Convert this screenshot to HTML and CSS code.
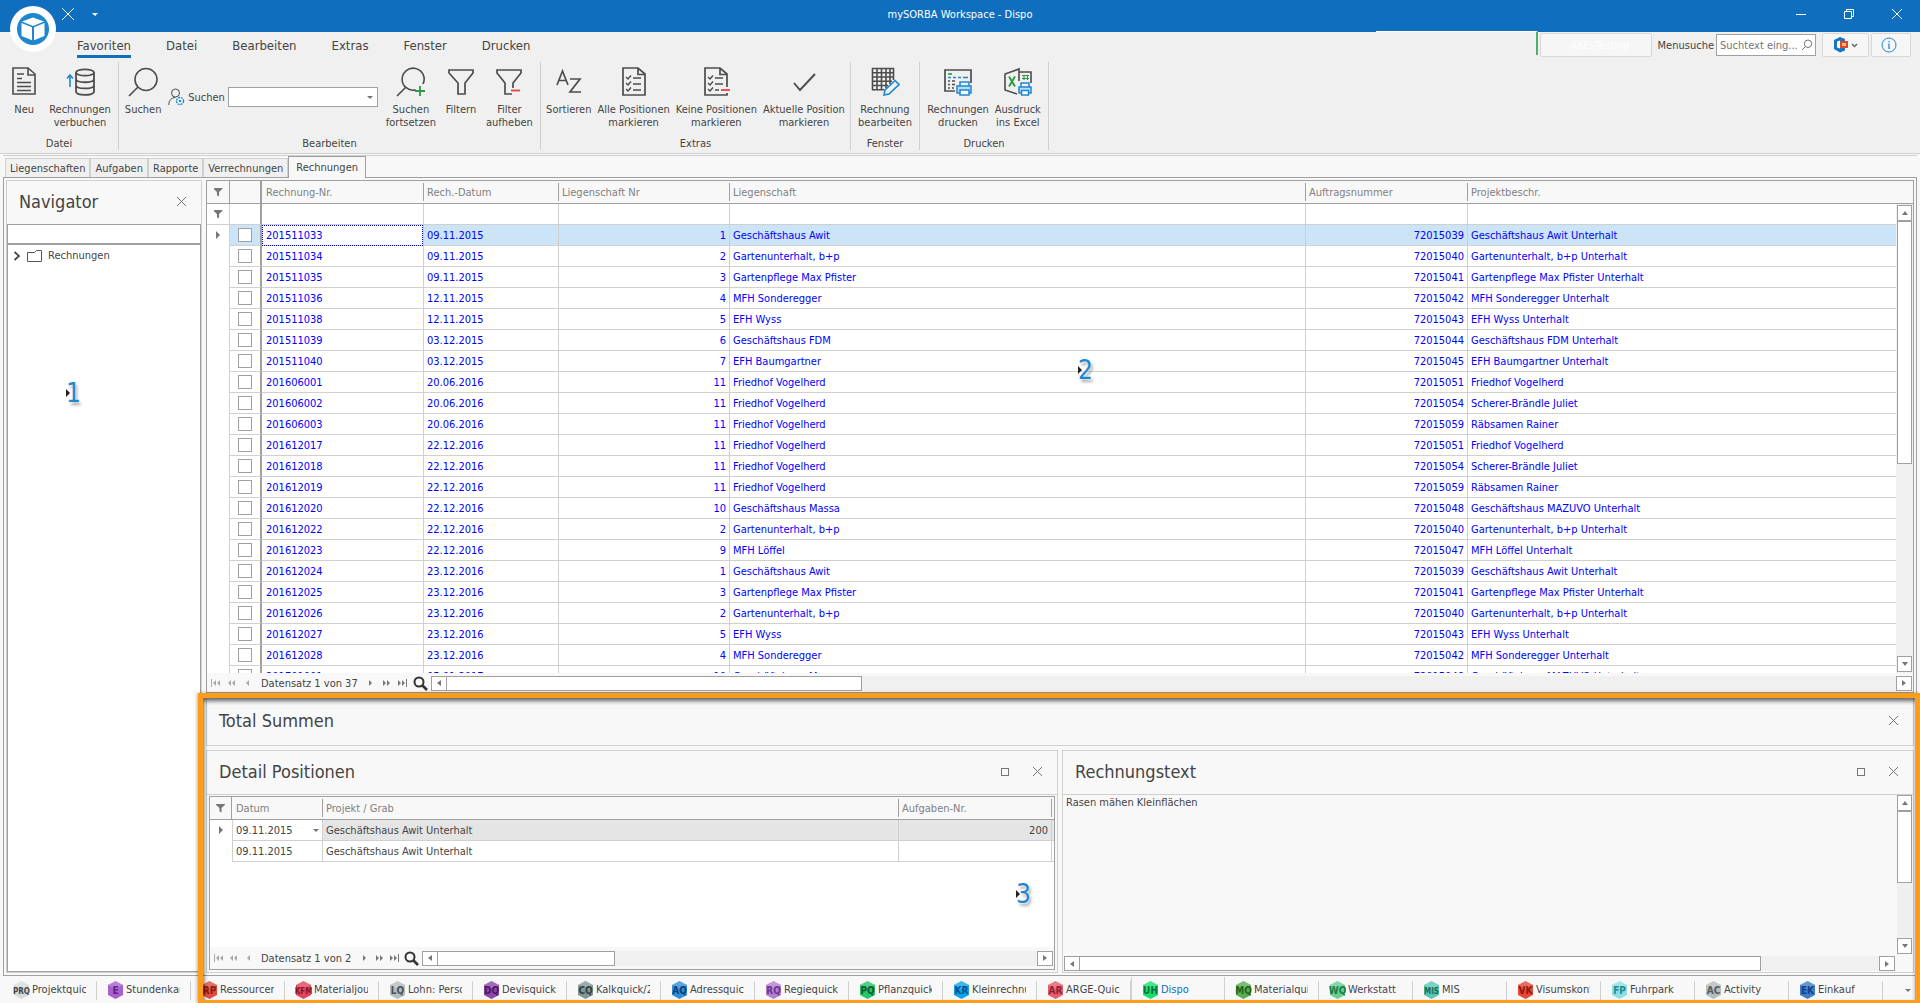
FILE: index.html
```
<!DOCTYPE html>
<html lang="de">
<head>
  <meta charset="UTF-8">
  <meta name="viewport" content="width=device-width, initial-scale=1.0">
  <title>mySORBA Workspace - Dispo</title>
  <link rel="stylesheet" href="styles.css">
</head>
<body>

<header class="titlebar">
  <div class="quick">
    <button aria-label="Schliessen"><svg width="14" height="14" viewBox="0 0 14 14"><path d="M1 1l12 12M13 1L1 13" stroke="#fff" fill="none"/></svg></button>
    <button aria-label="Anpassen"><span class="caret white"></span></button>
  </div>
  <div class="title">mySORBA Workspace - Dispo</div>
  <div class="window-buttons">
    <button aria-label="Minimieren"><svg width="12" height="12" viewBox="0 0 12 12"><path d="M1 6.500h10" stroke="#fff"/></svg></button>
    <button aria-label="Verkleinern"><svg width="12" height="12" viewBox="0 0 12 12"><path d="M1.500 3.500h7v7h-7zM3.500 3.500v-2h7v7h-2" stroke="#fff" fill="none"/></svg></button>
    <button aria-label="Beenden"><svg width="12" height="12" viewBox="0 0 12 12"><path d="M1 1l10 10M11 1L1 11" stroke="#fff" fill="none"/></svg></button>
  </div>
</header>

<svg class="logo" width="46" height="46" viewBox="0 0 46 46">
  <circle cx="23" cy="23" r="23" fill="#fff"/>
  <circle cx="23" cy="23" r="16" fill="#1e87d2"/>
  <path d="M23 11.500l11 4-11 4.500-11-4.500zM11.500 17l10.500 4.300v13L11.500 30zM34.500 17L24 21.300v13L34.500 30z" fill="#fff"/>
</svg>

<section class="ribbon">
  <div class="menu-row">
    <nav class="menu">
      <a href="#" class="active">Favoriten</a>
      <a href="#">Datei</a>
      <a href="#">Bearbeiten</a>
      <a href="#">Extras</a>
      <a href="#">Fenster</a>
      <a href="#">Drucken</a>
    </nav>
    <div class="menu-tools">
      <div class="progress"></div>
      <select class="user-select" aria-label="Benutzer"><option>AaEsTesting</option></select>
      <label for="menuSearch">Menusuche</label>
      <div class="search-box">
        <input type="text" id="menuSearch" placeholder="Suchtext eing...">
        <svg width="12" height="12" viewBox="0 0 12 12"><path d="M7 1a3.500 3.500 0 1 1 0 7.500A3.700 3.700 0 0 1 7 1zM4.500 7.500L1 11" stroke="#777" fill="none"/></svg>
      </div>
      <button class="tool office" aria-label="Office">
        <svg width="15" height="16" viewBox="0 0 15 16"><path d="M7 0L1 3v9l6 3.500 5-2V11H6V4h6V2z" fill="#1576c4"/><path d="M7 4h8v7H7z" fill="#e04a17"/><path d="M9 6h4v3H9z" fill="#fff" opacity=".6"/><path d="M4 4.500l3-1v8l-3-1z" fill="#fff"/></svg>
        <svg width="7" height="5" viewBox="0 0 7 5"><path d="M1 1l2.500 2.500L6 1" stroke="#666" stroke-width="1.500" fill="none"/></svg>
      </button>
      <button class="tool info" aria-label="Info">
        <svg width="16" height="16" viewBox="0 0 16 16"><circle cx="8" cy="8" r="7" stroke="#1e87d2" fill="none"/><path d="M8 6.500V12M8 4v1.200" stroke="#1e87d2" stroke-width="1.300"/></svg>
      </button>
    </div>
  </div>

  <div class="groups">
    <div class="group datei">
      <div class="group-items">
        <button class="big"><svg width="28" height="30" viewBox="0 0 28 30"><g stroke="#4d4d4d" stroke-width="1.600" fill="none"><path d="M3 2h15l7 6v20H3z" transform="translate(0 -1)"/><path d="M18 1v7h7"/><path d="M7 7h7M7 11.500h5M7 15.500h14M7 19.500h14M7 23.500h14" stroke-width="1.300"/></g></svg><span>Neu</span></button>
        <button class="big"><svg width="30" height="30" viewBox="0 0 30 30"><g stroke="#4d4d4d" stroke-width="1.800" fill="none"><ellipse cx="20" cy="5.500" rx="9" ry="3.200"/><path d="M11 5.500v19c0 4.500 18 4.500 18 0v-19M11 12c0 4.300 18 4.300 18 0M11 18.200c0 4.300 18 4.300 18 0"/></g><path d="M5 20V8M2 11.500L5 8l3 3.500" stroke="#1e87d2" stroke-width="1.600" fill="none"/></svg><span>Rechnungen<br>verbuchen</span></button>
      </div>
      <div class="caption">Datei</div>
    </div>

    <div class="group bearbeiten">
      <div class="group-items">
        <button class="big"><svg width="30" height="30" viewBox="0 0 30 30"><path d="M18 1.500a11 11 0 1 1 0 22 11 11 0 0 1 0-22zM10 20l-9 9" stroke="#4d4d4d" stroke-width="1.600" fill="none"/></svg><span>Suchen</span></button>
        <div class="person-search">
          <svg width="17" height="18" viewBox="0 0 17 18"><g stroke="#4d4d4d" fill="none"><circle cx="7.500" cy="5" r="4"/><path d="M.8 17c0-5 3-7.500 6.700-7.500"/></g><circle cx="12" cy="13" r="3.500" fill="#fff" stroke="#1e87d2" stroke-width="1.400" stroke-dasharray="2 .8"/><circle cx="12" cy="13" r="1.300" fill="#1e87d2"/></svg>
          <label for="personSelect">Suchen</label>
          <div class="combo"><select id="personSelect"><option></option></select><span class="caret"></span></div>
        </div>
        <button class="big"><svg width="30" height="30" viewBox="0 0 30 30"><path d="M19.500 22.900A11 11 0 1 1 27 17M10 20l-9 9" stroke="#4d4d4d" stroke-width="1.600" fill="none"/><path d="M24 19v10M19 24h10" stroke="#2a9a47" stroke-width="1.800"/></svg><span>Suchen<br>fortsetzen</span></button>
        <button class="big"><svg width="28" height="30" viewBox="0 0 28 30"><path d="M2 3h24v3l-8 10v11h-7V16L2 6z" stroke="#4d4d4d" stroke-width="1.700" fill="none"/></svg><span>Filtern</span></button>
        <button class="big"><svg width="28" height="30" viewBox="0 0 28 30"><path d="M18 21v-5l8-10V3H2v3l8 10v11h7" stroke="#4d4d4d" stroke-width="1.700" fill="none"/><path d="M16 23.500h9" stroke="#f04040" stroke-width="1.800"/></svg><span>Filter<br>aufheben</span></button>
      </div>
      <div class="caption">Bearbeiten</div>
    </div>

    <div class="group extras">
      <div class="group-items">
        <button class="big"><svg width="28" height="30" viewBox="0 0 28 30"><path d="M2 18L7.500 4 13 18M4 13.500h7M15 12h10L15 25h11" stroke="#4d4d4d" stroke-width="1.700" fill="none"/></svg><span>Sortieren</span></button>
        <button class="big"><svg width="28" height="30" viewBox="0 0 28 30"><g stroke="#4d4d4d" fill="none"><path d="M3 1h15l7 6v21H3zM18 1v6.500h7" stroke-width="1.700"/><path d="M6 10l2 2 3-3.500M6 16l2 2 3-3.500M6 22l2 2 3-3.500M13 11h8M13 17h8M13 23h8" stroke-width="1.400"/></g></svg><span>Alle Positionen<br>markieren</span></button>
        <button class="big"><svg width="28" height="30" viewBox="0 0 28 30"><g stroke="#4d4d4d" fill="none"><path d="M25 20V7l-7-6H3v27h22v-2M18 1v6.500h7" stroke-width="1.700"/><path d="M6 10l2 2 3-3.500M6 16l2 2 3-3.500M6 22l2 2 3-3.500M13 11h8M13 17h8M13 23h4" stroke-width="1.400"/></g><path d="M19 23h9" stroke="#f04040" stroke-width="1.800"/></svg><span>Keine Positionen<br>markieren</span></button>
        <button class="big"><svg width="28" height="30" viewBox="0 0 28 30"><path d="M4 16l6 7L25 7" stroke="#4d4d4d" stroke-width="1.900" fill="none"/></svg><span>Aktuelle Position<br>markieren</span></button>
      </div>
      <div class="caption">Extras</div>
    </div>

    <div class="group fenster">
      <div class="group-items">
        <button class="big"><svg width="30" height="30" viewBox="0 0 30 30"><path d="M2 1.500h22M2 5.700h22M2 10h22M2 14.200h20M2 18.500h16M2 22.700h12M2.500 1v22M7 1v22M11.500 1v22M16 1v20M20 1v16M23.500 1v12" stroke="#4d4d4d" stroke-width="1.600" fill="none"/><path d="M14 28l1-5 10-9.500 4 4L19 27z" fill="#f0f0f0" stroke="#1e87d2" stroke-width="1.600"/></svg><span>Rechnung<br>bearbeiten</span></button>
      </div>
      <div class="caption">Fenster</div>
    </div>

    <div class="group drucken">
      <div class="group-items">
        <button class="big"><svg width="30" height="30" viewBox="0 0 30 30"><path d="M12 24H2V3h26v13" stroke="#4d4d4d" stroke-width="1.700" fill="none"/><path d="M5 7h4" stroke="#2a9a47" stroke-width="1.700"/><path d="M5 10.500h3M10 10.500h3M15 10.500h3M20 10.500h5" stroke="#1e87d2" stroke-width="1.500"/><path d="M5 14h2M9 14h3M5 17.500h2M9 17.500h3M5 21h2M9 21h2" stroke="#4d4d4d" stroke-width="1.500"/><g stroke="#1e87d2" stroke-width="1.500" fill="#b9dcf5"><path d="M17 19v-4h9v4" fill="#f0f0f0"/><path d="M14 19h14v7H14z"/><path d="M17 23h9v5h-9z" fill="#fff"/></g></svg><span>Rechnungen<br>drucken</span></button>
        <button class="big"><svg width="30" height="30" viewBox="0 0 30 30"><path d="M14 27L2 23V7l14-5v12M16 5h12v11" stroke="#4d4d4d" stroke-width="1.600" fill="none"/><path d="M6 9.500l6 10M12 9.500l-6 10" stroke="#2a9a47" stroke-width="1.900"/><path d="M19 8.500h7M19 11.500h7M21 8v5M24.500 8v5" stroke="#2a9a47" stroke-width="1.200"/><g stroke="#1e87d2" stroke-width="1.500" fill="#b9dcf5"><path d="M18 20v-4h8v4" fill="#f0f0f0"/><path d="M16 20h12v6H16z"/><path d="M18.500 23.500h7V28h-7z" fill="#fff"/></g></svg><span>Ausdruck<br>ins Excel</span></button>
      </div>
      <div class="caption">Drucken</div>
    </div>
  </div>
</section>

<main class="document">
  <nav class="doc-tabs">
    <a href="#">Liegenschaften</a>
    <a href="#">Aufgaben</a>
    <a href="#">Rapporte</a>
    <a href="#">Verrechnungen</a>
    <a href="#" class="active">Rechnungen</a>
  </nav>

  <div class="frame">
    <aside class="panel navigator">
      <div class="panel-head"><h2>Navigator</h2><button class="close" aria-label="Schliessen"></button></div>
      <input type="text" class="nav-search" aria-label="Navigator durchsuchen">
      <ul class="tree">
        <li>
          <svg width="8" height="10" viewBox="0 0 8 10"><path d="M1.500 1l4.500 4-4.500 4" stroke="#444" stroke-width="1.700" fill="none"/></svg>
          <svg width="15" height="12" viewBox="0 0 15 12"><path d="M.5 11.500v-9h7l2-2h5v11z" stroke="#555" fill="none"/></svg>
          <a href="#">Rechnungen</a>
        </li>
      </ul>
    </aside>

    <div class="content">
      <section class="grid main-grid">
        <div class="grid-area">
          <table>
            <thead>
              <tr>
                <th class="c-ind"><span class="funnel"></span></th>
                <th class="c-check"></th>
                <th class="c-nr">Rechnung-Nr.</th>
                <th class="c-date"><span>Rech.-Datum</span></th>
                <th class="c-lnr"><span>Liegenschaft Nr</span></th>
                <th class="c-lieg"><span>Liegenschaft</span></th>
                <th class="c-auf"><span>Auftragsnummer</span></th>
                <th class="c-proj"><span>Projektbeschr.</span></th>
                <th class="c-scroll"></th>
              </tr>
            </thead>
            <tbody id="invoiceRows"></tbody>
          </table>
          <div class="vscroll">
            <button class="up" aria-label="Nach oben"></button>
            <div class="thumb"></div>
            <button class="down" aria-label="Nach unten"></button>
          </div>
        </div>
        <div class="pager">
          <div class="pager-nav" data-text="Datensatz 1 von 37"></div>
          <div class="hscroll">
            <button class="left" aria-label="Nach links"></button>
            <div class="thumb"></div>
            <button class="right" aria-label="Nach rechts"></button>
          </div>
        </div>
      </section>

      <section class="panel total">
        <div class="panel-head"><h2>Total Summen</h2><button class="close" aria-label="Schliessen"></button></div>
      </section>

      <div class="lower">
        <section class="panel detail">
          <div class="panel-head"><h2>Detail Positionen</h2><button class="maximize" aria-label="Maximieren"></button><button class="close" aria-label="Schliessen"></button></div>
          <div class="grid">
            <div class="grid-area">
              <table>
                <thead>
                  <tr>
                    <th class="c-ind"><span class="funnel"></span></th>
                    <th class="d-date">Datum</th>
                    <th><span>Projekt / Grab</span></th>
                    <th class="d-nr"><span>Aufgaben-Nr.</span></th>
                    <th class="d-end"><span></span></th>
                  </tr>
                </thead>
                <tbody>
                  <tr class="current">
                    <td class="ind"><i class="tri"></i></td>
                    <td class="edit"><div>09.11.2015<i class="caret"></i></div></td>
                    <td>Geschäftshaus Awit Unterhalt</td>
                    <td class="num">200</td>
                    <td></td>
                  </tr>
                  <tr>
                    <td class="ind"></td>
                    <td>09.11.2015</td>
                    <td>Geschäftshaus Awit Unterhalt</td>
                    <td class="num"></td>
                    <td></td>
                  </tr>
                </tbody>
              </table>
            </div>
            <div class="pager">
              <div class="pager-nav" data-text="Datensatz 1 von 2"></div>
              <div class="hscroll">
                <button class="left" aria-label="Nach links"></button>
                <div class="thumb"></div>
                <button class="right" aria-label="Nach rechts"></button>
              </div>
            </div>
          </div>
        </section>

        <section class="panel invoice-text">
          <div class="panel-head"><h2>Rechnungstext</h2><button class="maximize" aria-label="Maximieren"></button><button class="close" aria-label="Schliessen"></button></div>
          <div class="text-area">
            <textarea aria-label="Rechnungstext">Rasen mähen Kleinflächen</textarea>
            <div class="vscroll">
              <button class="up" aria-label="Nach oben"></button>
              <div class="thumb"></div>
              <button class="down" aria-label="Nach unten"></button>
            </div>
          </div>
          <div class="hscroll">
            <button class="left" aria-label="Nach links"></button>
            <div class="thumb"></div>
            <button class="right" aria-label="Nach rechts"></button>
          </div>
        </section>
      </div>
    </div>
  </div>
</main>

<footer class="app-tabs" id="appTabs"></footer>

<div class="highlight"></div>
<div class="marker m1"><span>1</span></div>
<div class="marker m2"><span>2</span></div>
<div class="marker m3"><span>3</span></div>

<script>
  const invoices = [
    ["201511033", "09.11.2015", 1, "Geschäftshaus Awit", "72015039", "Geschäftshaus Awit Unterhalt"],
    ["201511034", "09.11.2015", 2, "Gartenunterhalt, b+p", "72015040", "Gartenunterhalt, b+p Unterhalt"],
    ["201511035", "09.11.2015", 3, "Gartenpflege Max Pfister", "72015041", "Gartenpflege Max Pfister Unterhalt"],
    ["201511036", "12.11.2015", 4, "MFH Sonderegger", "72015042", "MFH Sonderegger Unterhalt"],
    ["201511038", "12.11.2015", 5, "EFH Wyss", "72015043", "EFH Wyss Unterhalt"],
    ["201511039", "03.12.2015", 6, "Geschäftshaus FDM", "72015044", "Geschäftshaus FDM Unterhalt"],
    ["201511040", "03.12.2015", 7, "EFH Baumgartner", "72015045", "EFH Baumgartner Unterhalt"],
    ["201606001", "20.06.2016", 11, "Friedhof Vogelherd", "72015051", "Friedhof Vogelherd"],
    ["201606002", "20.06.2016", 11, "Friedhof Vogelherd", "72015054", "Scherer-Brändle Juliet"],
    ["201606003", "20.06.2016", 11, "Friedhof Vogelherd", "72015059", "Räbsamen Rainer"],
    ["201612017", "22.12.2016", 11, "Friedhof Vogelherd", "72015051", "Friedhof Vogelherd"],
    ["201612018", "22.12.2016", 11, "Friedhof Vogelherd", "72015054", "Scherer-Brändle Juliet"],
    ["201612019", "22.12.2016", 11, "Friedhof Vogelherd", "72015059", "Räbsamen Rainer"],
    ["201612020", "22.12.2016", 10, "Geschäftshaus Massa", "72015048", "Geschäftshaus MAZUVO Unterhalt"],
    ["201612022", "22.12.2016", 2, "Gartenunterhalt, b+p", "72015040", "Gartenunterhalt, b+p Unterhalt"],
    ["201612023", "22.12.2016", 9, "MFH Löffel", "72015047", "MFH Löffel Unterhalt"],
    ["201612024", "23.12.2016", 1, "Geschäftshaus Awit", "72015039", "Geschäftshaus Awit Unterhalt"],
    ["201612025", "23.12.2016", 3, "Gartenpflege Max Pfister", "72015041", "Gartenpflege Max Pfister Unterhalt"],
    ["201612026", "23.12.2016", 2, "Gartenunterhalt, b+p", "72015040", "Gartenunterhalt, b+p Unterhalt"],
    ["201612027", "23.12.2016", 5, "EFH Wyss", "72015043", "EFH Wyss Unterhalt"],
    ["201612028", "23.12.2016", 4, "MFH Sonderegger", "72015042", "MFH Sonderegger Unterhalt"],
    ["201701001", "05.01.2017", 10, "Geschäftshaus Massa", "72015048", "Geschäftshaus MAZUVO Unterhalt"]
  ];

  // code, label, colour, text colour
  const apps = [
    ["PRQ", "Projektquick", "#d5dbdd", "#444"],
    ["E", "Stundenkarte", "#a95fd0", "#5b2480"],
    ["RP", "Ressourcenplan", "#e24a3b", "#8a1c14"],
    ["KFM", "Materialjournal", "#e0455c", "#8a1428"],
    ["LQ", "Lohn: Personal", "#b4bcc0", "#4a5256"],
    ["DQ", "Devisquick/2", "#8e44ad", "#4c1a63"],
    ["CQ", "Kalkquick/2", "#839595", "#2f4242"],
    ["AQ", "Adressquick", "#2f8fd6", "#0d3f78"],
    ["RQ", "Regiequick/2", "#b57fd0", "#6c3590"],
    ["PQ", "Pflanzquick", "#27c468", "#0c5a2c"],
    ["KR", "Kleinrechnung", "#0aa5e8", "#06508c"],
    ["AR", "ARGE-Quick", "#e75c6c", "#8f1f33"],
    ["UH", "Dispo", "#18df6d", "#08743a"],
    ["MQ", "Materialquick", "#58ae4e", "#28621f"],
    ["WQ", "Werkstatt", "#66cf92", "#207a48"],
    ["MIS", "MIS", "#5ac7b0", "#1e6b5d"],
    ["VK", "Visumskontrolle", "#e54837", "#8c1a10"],
    ["FP", "Fuhrpark", "#8ae0e3", "#218c92"],
    ["AC", "Activity", "#b7bcbf", "#555b5f"],
    ["EK", "Einkauf", "#3b7dc9", "#173f85"]
  ];

  function renderInvoices() {
    let html = `<tr class="filter"><td class="ind"><span class="funnel"></span></td><td class="check"></td><td></td><td></td><td></td><td></td><td></td><td></td><td class="pad"></td></tr>`;
    invoices.forEach((row, i) => {
      html += `
        <tr class="${i === 0 ? "selected" : ""}">
          <td class="ind">${i === 0 ? '<i class="tri"></i>' : ""}</td>
          <td class="check"><input type="checkbox" aria-label="Rechnung ${row[0]}"></td>
          <td class="nr">${row[0]}</td>
          <td>${row[1]}</td>
          <td class="num">${row[2]}</td>
          <td>${row[3]}</td>
          <td class="num">${row[4]}</td>
          <td>${row[5]}</td>
          <td class="pad"></td>
        </tr>`;
    });
    document.getElementById("invoiceRows").innerHTML = html;
  }

  function renderPagers() {
    const icon = (label, d, off) => `<button aria-label="${label}" class="${off ? "off" : ""}"><svg width="10" height="8" viewBox="0 0 10 8"><path d="${d}"/></svg></button>`;
    document.querySelectorAll(".pager-nav").forEach(nav => {
      nav.innerHTML =
        icon("Erster", "M0 0h1v8H0zM5 1v6L2 4zM9 1v6L6 4z", true) +
        icon("Seite zurück", "M4 1v6L1 4zM8 1v6L5 4z", true) +
        icon("Zurück", "M6 1v6L3 4z", true) +
        `<span>${nav.dataset.text}</span>` +
        icon("Weiter", "M4 1v6l3-3z") +
        icon("Seite vor", "M2 1v6l3-3zM6 1v6l3-3z") +
        icon("Letzter", "M1 1v6l3-3zM5 1v6l3-3zM9 0h1v8H9z") +
        `<button class="find" aria-label="Suchen"><svg width="15" height="15" viewBox="0 0 15 15"><circle cx="6" cy="6" r="4.500" stroke="#333" stroke-width="2" fill="none"/><path d="M9 9l5 5" stroke="#333" stroke-width="2.600"/></svg></button>`;
    });
  }

  function renderApps() {
    const tabs = apps.map(([code, name, color, ink]) => `
      <a href="#" class="app-tab ${name === "Dispo" ? "active" : ""}">
        <svg width="17" height="18" viewBox="0 0 17 18">
          <path d="M8.500 0l7.500 4v10l-7.500 4L1 14V4z" fill="${color}"/>
          <path d="M8.500 0l7.500 4-7.500 4L1 4z" fill="#fff" opacity=".2"/>
          <text x="8.500" y="13" text-anchor="middle" font-size="${code.length > 2 ? 8 : 10}" fill="${ink}">${code}</text>
        </svg><span>${name}</span>
      </a>`).join("");
    document.getElementById("appTabs").innerHTML = tabs + '<button aria-label="Weitere"><span class="caret"></span></button>';
  }

  renderInvoices();
  renderPagers();
  renderApps();
</script>

</body>
</html>
```
FILE: styles.css
```
* {
  box-sizing: border-box;
}

body {
  margin: 0;
  height: 100vh;
  display: flex;
  flex-direction: column;
  overflow: hidden;
  position: relative;
  background: #f8f8f8;
  color: #444;
  font-family: "DejaVu Sans Condensed", "DejaVu Sans", sans-serif;
  font-size: 11px;
  line-height: 13px;
}

button, input, select, textarea {
  font: inherit;
  color: inherit;
  margin: 0;
  padding: 0;
  border: 0;
  border-radius: 0;
  background: none;
}

a {
  color: inherit;
  text-decoration: none;
}

svg {
  display: block;
  flex: none;
}

.caret {
  display: inline-block;
  border: 3px solid transparent;
  border-top-color: #777;
  border-bottom: 0;
}

.caret.white {
  border-top-color: #fff;
}

/* title bar */
.titlebar {
  flex: none;
  height: 32px;
  display: grid;
  grid-template-columns: 1fr auto 1fr;
  align-items: center;
  background: #106ebe;
  color: #fff;
  padding-bottom: 4px;
}

.quick {
  display: flex;
  align-items: center;
  gap: 17px;
  padding-left: 61px;
}

.quick .caret {
  display: block;
}

.window-buttons {
  display: flex;
  justify-content: flex-end;
  gap: 36px;
  padding-right: 17px;
}

.logo {
  position: absolute;
  left: 10px;
  top: 6px;
}

/* ribbon */
.ribbon {
  flex: none;
  background: #f0f0f0;
  border-bottom: 1px solid #d0d0d0;
}

.menu-row {
  display: flex;
  justify-content: space-between;
  height: 26px;
}

.menu {
  display: flex;
  gap: 35px;
  padding-left: 77px;
  font-size: 13px;
  line-height: 16px;
}

.menu a {
  padding-top: 6px;
  height: 26px;
}

.menu a.active {
  border-bottom: 3px solid #106ebe;
}

.menu-tools {
  display: flex;
  align-items: flex-start;
  padding: 1px 9px 0 0;
}

.progress {
  width: 162px;
  height: 24px;
  margin-top: -2px;
  padding-bottom: 2px;
  border-top: 1px solid #fff;
  border-right: 2px solid #4fae6c;
}

.user-select {
  width: 112px;
  height: 24px;
  margin: 0 6px 0 2px;
  padding-left: 30px;
  appearance: none;
  border: 1px solid #d8d8d8;
  border-radius: 2px;
  background: #f6f6f6;
  color: #fff;
}

.menu-tools label {
  padding-top: 6px;
}

.search-box {
  display: flex;
  align-items: center;
  width: 100px;
  height: 22px;
  margin: 1px 6px 0 2px;
  padding: 0 2px 0 3px;
  border: 1px solid #a0a0a0;
  background: #fff;
}

.search-box input {
  flex: 1;
  min-width: 0;
  outline: 0;
}

.tool {
  display: flex;
  align-items: center;
  justify-content: center;
  gap: 3px;
  width: 47px;
  height: 24px;
  border: 1px solid #d8d8d8;
  border-radius: 2px;
  background: #f6f6f6;
}

.tool.info {
  width: 40px;
  margin-left: 2px;
  padding-right: 4px;
}

.groups {
  display: flex;
  padding-top: 4px;
  height: 95px;
}

.group {
  display: flex;
  flex-direction: column;
  justify-content: space-between;
  height: 88px;
  border-right: 1px solid #d0d0d0;
}

.group.datei { width: 119px; }
.group.bearbeiten { width: 422px; }
.group.extras { width: 310px; }
.group.fenster { width: 69px; }
.group.drucken { width: 129px; }

.group-items {
  display: flex;
  justify-content: center;
  padding-top: 5px;
}

.group.datei .group-items, .group.bearbeiten .group-items {
  padding-right: 2px;
}

.big {
  display: flex;
  flex-direction: column;
  align-items: center;
  gap: 6px;
  height: 62px;
  min-width: 44px;
  padding: 0 3px;
  text-align: center;
  white-space: nowrap;
}

.caption {
  text-align: center;
}

.person-search {
  display: flex;
  align-items: center;
  gap: 3px;
  height: 20px;
  margin: 20px 5px 0 3px;
}

.combo {
  position: relative;
}

.combo select {
  display: block;
  width: 150px;
  height: 20px;
  appearance: none;
  border: 1px solid #a0a0a0;
  background: #fff;
}

.combo .caret {
  position: absolute;
  right: 5px;
  top: 9px;
}

/* document area */
.document {
  flex: 1;
  min-height: 0;
  display: flex;
  flex-direction: column;
  margin: 1px 3px 0 3px;
  border-top: 1px solid #d0d0d0;
}

.doc-tabs {
  display: flex;
  align-items: flex-end;
  height: 21px;
  padding-left: 2px;
}

.doc-tabs a {
  padding: 3px 4px 2px 4px;
  height: 19px;
  background: #f0f0f0;
  border: 1px solid #d0d0d0;
  border-bottom: 0;
}

.doc-tabs a.active {
  height: 22px;
  margin-bottom: -1px;
  padding: 4px 7px 0 7px;
  background: #f8f8f8;
  border-color: #a0a0a0;
  position: relative;
}

.frame {
  flex: 1;
  min-height: 0;
  display: flex;
  gap: 4px;
  padding: 2px;
  border: 1px solid #a0a0a0;
}

.panel {
  display: flex;
  flex-direction: column;
  min-width: 0;
  border: 1px solid #d0d0d0;
}

.panel-head {
  display: flex;
  align-items: center;
  gap: 17px;
  flex: none;
  height: 43px;
  padding: 0 12px 2px 12px;
}

.panel-head h2 {
  flex: 1;
  margin: 0;
  font-size: 18px;
  font-weight: normal;
  line-height: 24px;
}

.close, .maximize {
  width: 15px;
  height: 15px;
  background: linear-gradient(45deg, transparent 46%, #777 46%, #777 54%, transparent 54%) center / 9px 9px no-repeat,
    linear-gradient(-45deg, transparent 46%, #777 46%, #777 54%, transparent 54%) center / 9px 9px no-repeat;
}

.maximize {
  width: 8px;
  height: 8px;
  margin-right: 4px;
  background: none;
  border: 1px solid #777;
}

.navigator {
  width: 196px;
  flex: none;
}

.nav-search {
  flex: none;
  height: 21px;
  border: 1px solid #a0a0a0;
  border-bottom-width: 2px;
  background: #fff;
}

.tree {
  flex: 1;
  margin: 0;
  padding: 4px 5px;
  list-style: none;
  background: #fff;
  border: 1px solid #a0a0a0;
  border-top: 0;
}

.tree li {
  display: flex;
  align-items: center;
  height: 13px;
  gap: 6px;
}

/* data grids */
.content {
  flex: 1;
  min-width: 0;
  display: flex;
  flex-direction: column;
  gap: 4px;
}

.grid {
  flex: 1;
  min-height: 0;
  display: flex;
  flex-direction: column;
  border: 1px solid #a0a0a0;
  background: #fff;
}

.grid-area {
  flex: 1;
  min-height: 0;
  overflow: hidden;
  position: relative;
}

table {
  width: 100%;
  table-layout: fixed;
  border-collapse: separate;
  border-spacing: 0;
}

th {
  height: 23px;
  padding: 0;
  font-weight: normal;
  text-align: left;
  color: #808080;
  background: #f8f8f8;
  border-bottom: 1px solid #a0a0a0;
  white-space: nowrap;
}

th > span {
  display: block;
  height: 18px;
  padding: 3px 3px 2px 3px;
  border-left: 1px solid #a0a0a0;
}

td {
  height: 21px;
  padding: 0 3px;
  border-bottom: 1px solid #d0d0d0;
  border-left: 1px solid #d0d0d0;
  overflow: hidden;
  white-space: nowrap;
}

.c-ind, .ind {
  width: 22px;
  text-align: center;
}

td.ind {
  padding: 0;
  border-left: 0;
  border-bottom-color: transparent;
}

.main-grid .c-check {
  width: 33px;
  border-left: 1px solid #a0a0a0;
  border-right: 2px solid #a0a0a0;
}

.main-grid .check {
  padding: 0;
  text-align: center;
  border-right: 2px solid #a0a0a0;
}

.c-nr { width: 161px; }
.c-date { width: 135px; }
.c-lnr { width: 171px; }
.c-lieg { width: 576px; }
.c-auf { width: 162px; }
.c-scroll { width: 17px; }

th.c-nr, th.d-date {
  padding-left: 4px;
}

.main-grid tbody {
  color: #0000ff;
}

.main-grid td.nr, .main-grid .filter td:nth-child(3) {
  padding-left: 4px;
  border-left: 0;
}

.main-grid td.pad {
  border: 0;
  background: #f0f0f0;
}

.filter .ind {
  border-bottom-color: #d0d0d0;
}

.num {
  text-align: right;
}

.selected td {
  background: #cce4f7;
}

.selected td.ind {
  background: #fff;
}

.selected td.nr {
  background: #fff;
  outline: 1px dotted #0000c0;
  outline-offset: -1px;
}

.check input {
  display: block;
  appearance: none;
  width: 14px;
  height: 14px;
  margin: 0 auto;
  border: 1px solid #a0a0a0;
  background: #fff;
}

th > .funnel, .funnel {
  display: block;
  width: 9px;
  height: 9px;
  margin: 0 auto;
  padding: 0;
  border: 0;
  background: #777;
  clip-path: polygon(0 0, 100% 0, 100% 15%, 62% 50%, 62% 100%, 38% 85%, 38% 50%, 0 15%);
}

.tri {
  display: block;
  width: 0;
  margin: 0 auto;
  border: 4px solid transparent;
  border-left-color: #777;
  border-right: 0;
}

/* scroll bars */
.vscroll, .hscroll {
  display: flex;
  background: #f0f0f0;
}

.vscroll {
  flex-direction: column;
  width: 15px;
}

.main-grid .vscroll {
  position: absolute;
  top: 24px;
  right: 1px;
  bottom: 1px;
}

.hscroll {
  flex: 1;
  height: 15px;
}

.vscroll button, .hscroll button {
  display: flex;
  align-items: center;
  justify-content: center;
  flex: none;
  width: 16px;
  height: 15px;
  border: 1px solid #a0a0a0;
  background: #fff;
}

.vscroll button {
  width: 15px;
  height: 16px;
}

.vscroll button::before, .hscroll button::before {
  content: "";
  border: 0 solid transparent;
}

.vscroll .up::before { border-width: 0 3px 4px 3px; border-bottom-color: #777; }
.vscroll .down::before { border-width: 4px 3px 0 3px; border-top-color: #777; }
.hscroll .left::before { border-width: 3px 4px 3px 0; border-right-color: #777; }
.hscroll .right::before { border-width: 3px 0 3px 4px; border-left-color: #777; }

.thumb {
  border: 1px solid #a0a0a0;
  background: #fff;
}

.hscroll .thumb {
  border-left: 0;
}

.down {
  margin-top: auto;
}

.right {
  margin-left: auto;
}

.main-grid .vscroll .thumb { height: 52%; }
.main-grid .hscroll .thumb { width: 28%; }
.detail .hscroll .thumb { width: 28%; }
.invoice-text .vscroll .thumb { height: 45%; }
.invoice-text .hscroll .thumb { width: 82%; }

.pager {
  display: flex;
  align-items: center;
  flex: none;
  height: 19px;
  padding: 1px 1px 0 0;
  background: #f8f8f8;
}

.pager-nav {
  display: flex;
  align-items: center;
  width: 224px;
  padding-left: 4px;
  gap: 6px;
}

.pager-nav span {
  width: 98px;
  padding-left: 2px;
  margin-right: 2px;
  white-space: nowrap;
}

.pager-nav path {
  fill: #777;
}

.pager-nav .off path {
  fill: #a8a8a8;
}

.pager-nav .find path {
  fill: none;
}

/* lower panels */
.total .panel-head {
  height: 47px;
}

.lower {
  flex: none;
  display: grid;
  grid-template-columns: 1fr 1fr;
  gap: 4px;
  height: 223px;
}

.detail .panel-head, .invoice-text .panel-head {
  height: 44px;
  border-bottom: 1px solid #d0d0d0;
}

.detail .grid {
  margin: 1px 2px 2px 2px;
}

.detail .c-ind {
  border-right: 1px solid #a0a0a0;
}

.d-date { width: 90px; }
.d-nr { width: 153px; }
.d-end { width: 3px; }

.detail .current td {
  background: #e5e5e5;
}

.detail .current .ind, .detail .current .edit {
  background: #fff;
}

.edit div {
  display: flex;
  align-items: center;
  justify-content: space-between;
}

.detail .pager {
  height: 22px;
  padding-top: 0;
}

.detail .pager-nav {
  width: 212px;
  gap: 5px;
}

.detail .pager-nav span {
  width: 92px;
  margin-right: 3px;
}

.text-area {
  flex: 1;
  min-height: 0;
  display: flex;
  padding-right: 1px;
}

.text-area textarea {
  flex: 1;
  padding: 1px 3px;
  resize: none;
  outline: 0;
  overflow: hidden;
}

.invoice-text > .hscroll {
  flex: none;
  margin: 2px 18px 1px 1px;
}

/* program tabs */
.app-tabs {
  flex: none;
  display: flex;
  height: 27px;
  padding: 1px 9px 3px 3px;
}

.app-tab {
  display: flex;
  align-items: center;
  gap: 1px;
  flex: 0 1 94px;
  min-width: 0;
  padding: 2px 11px 0 10px;
  background: linear-gradient(#d0d0d0, #d0d0d0) right bottom / 1px 19px no-repeat;
}

.app-tab text {
  font-family: "DejaVu Sans Condensed", sans-serif;
  font-weight: bold;
}

.app-tab span {
  flex: 1;
  padding-left: 1px;
  overflow: hidden;
  white-space: nowrap;
}

.app-tab.active {
  color: #106ebe;
  background: none;
  border: 1px solid #d0d0d0;
  border-width: 0 1px;
}

.app-tabs button {
  margin-left: auto;
}

/* annotations over the window */
.highlight {
  position: absolute;
  left: 198px;
  right: 0;
  top: 693px;
  bottom: 0;
  border: 5px solid #ff9d1a;
  border-bottom-width: 3px;
  box-shadow: -1px 0 3px rgba(0, 0, 0, 0.3), inset 1px 3px 4px rgba(0, 0, 0, 0.6);
  pointer-events: none;
}

.marker {
  position: absolute;
  padding: 0 2px;
  font-size: 26px;
  line-height: 26px;
  color: #1e87d2;
  text-shadow: 0 0 2px #fff, 2px 3px 3px rgba(0, 0, 0, 0.35);
}

.marker::before {
  content: "";
  position: absolute;
  left: 2px;
  top: 9px;
  border: 4px solid transparent;
  border-left-color: #222;
  border-right: 0;
}

.marker span {
  position: relative;
}

.m1 { left: 64px; top: 380px; }
.m2 { left: 1076px; top: 357px; }
.m3 { left: 1014px; top: 881px; }
```
